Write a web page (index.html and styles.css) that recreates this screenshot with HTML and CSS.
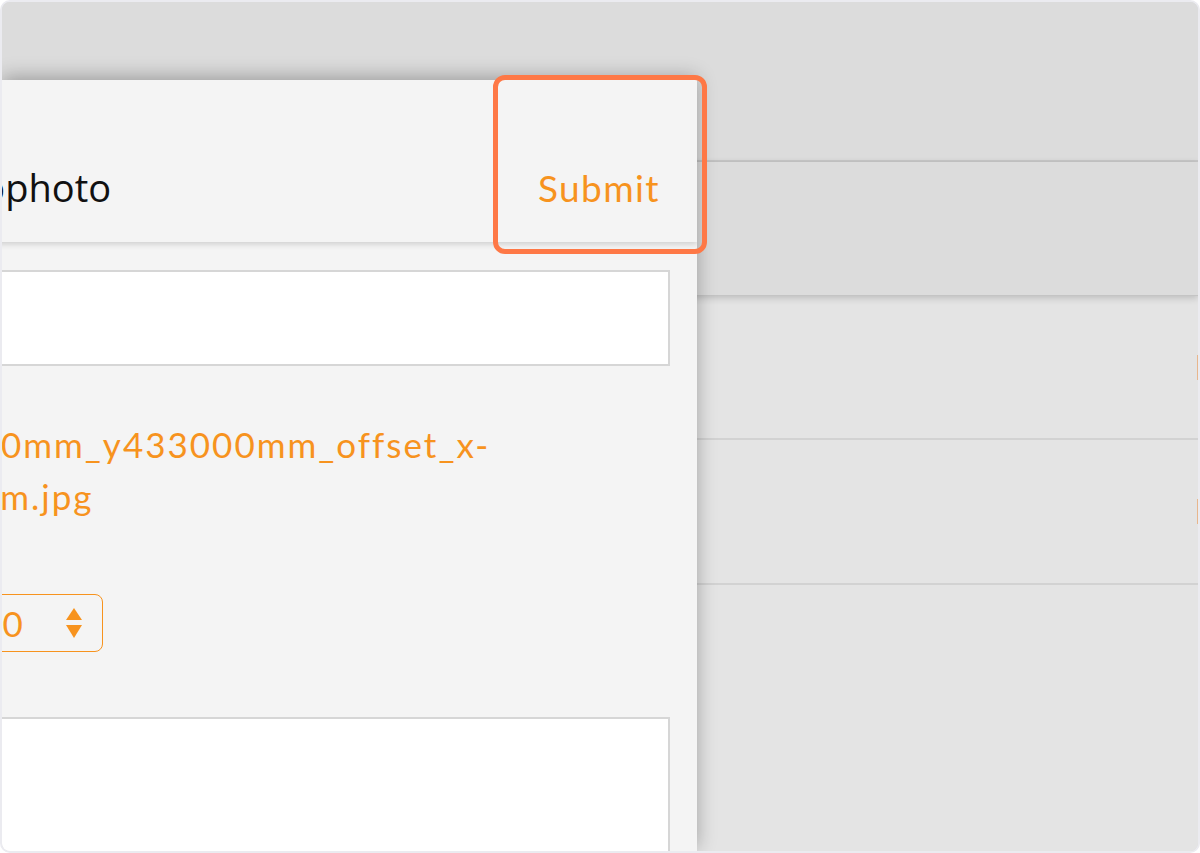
FILE: index.html
```html
<!DOCTYPE html>
<html>
<head>
	<title>Add geophoto</title>
	<meta name="viewport" content="width=device-width">
<link rel="stylesheet" href="styles.css">
</head>
<body>
	<div class="frame">
		<div class="toolbar"></div>
		<div class="subbar"></div>
		<div class="list">
			<div class="row"><span class="chip"></span></div>
			<div class="row"><span class="chip"></span></div>
			<div class="row"></div>
		</div>

		<div class="sheet">
			<div class="sheet-head">
				<div class="sheet-title">Add geophoto</div>
				<button class="submit" type="button">Submit</button>
			</div>
			<div class="sheet-body">
				<input class="field" type="text" name="name">
				<div class="filename">x512000mm_y433000mm_offset_x-150.5mm.jpg</div>
				<div class="select">
					<span class="select-value">180</span>
					<svg class="select-arrows" width="16" height="30" viewBox="0 0 16 30">
						<path d="M8 0 L16 12 L0 12 Z" fill="#f7931e"/>
						<path d="M0 17 L16 17 L8 30 Z" fill="#f7931e"/>
					</svg>
				</div>
				<textarea class="notes" name="notes"></textarea>
			</div>
		</div>

		<div class="callout"></div>
	</div>
</body>
</html>
```
FILE: styles.css
```css
body{
	margin: 0;
	background: #fff;
	font-family: "Open Sans", sans-serif;
}

.frame{
	position: relative;
	height: 853px;
	box-sizing: border-box;
	border: 2px solid #ebebf0;
	border-radius: 10px;
	overflow: hidden;
	background: #dcdcdc;
}

/* app behind the sheet */
.toolbar{
	height: 158px;
	background: #dcdcdc;
	border-bottom: 2px solid #c8c8c8;
}
.subbar{
	position: relative;
	z-index: 1;
	height: 133px;
	background: #dcdcdc;
	border-bottom: 1px solid #c4c4c4;
	box-shadow: 0 2px 7px rgba(0,0,0,0.18);
}
.list{
	background: #e4e4e4;
	height: 600px;
}
.row{
	display: flex;
	justify-content: flex-end;
	align-items: center;
	height: 143px;
	border-bottom: 2px solid #d2d2d2;
}
.row:first-child{
	height: 142px;
}
.row:last-child{
	border-bottom: none;
}
.chip{
	width: 1px;
	height: 25px;
	background: #e8b68c;
}

/* sheet */
.sheet{
	position: absolute;
	z-index: 2;
	top: 78px;
	left: 0;
	bottom: 0;
	width: 695px;
	background: #f4f4f4;
	box-shadow: 0 -3px 18px rgba(0,0,0,0.3);
	overflow: hidden;
}
.sheet-head{
	display: flex;
	justify-content: space-between;
	align-items: flex-start;
	height: 162px;
	box-sizing: border-box;
	padding: 89px 37px 0 0;
	margin-left: -142px;
	background: #f4f4f4;
	box-shadow: 0 2px 6px rgba(0,0,0,0.16);
	position: relative;
}
.sheet-title{
	margin-top: -1px;
	font-size: 38px;
	line-height: 38px;
	color: #111;
}
.submit{
	border: none;
	background: none;
	padding: 0;
	font-family: Lato, sans-serif;
	font-size: 37px;
	line-height: 37px;
	letter-spacing: 1.4px;
	color: #f7931e;
}

.sheet-body{
	display: flex;
	flex-direction: column;
	align-items: flex-start;
	margin-left: -132px;
	padding: 28px 27px 0 0;
}
.field{
	display: block;
	width: 100%;
	height: 96px;
	box-sizing: border-box;
	border: 2px solid #d6d6d6;
	background: #fff;
	outline: none;
}
.filename{
	margin-top: 52px;
	font-family: Lato, sans-serif;
	font-size: 35px;
	line-height: 52px;
	letter-spacing: 2px;
	color: #f7931e;
	width: 100%;
}
.select{
	display: flex;
	align-items: center;
	justify-content: space-between;
	margin-top: 72px;
	width: 233px;
	height: 58px;
	box-sizing: border-box;
	padding: 0 20px 0 91px;
	border: 1.5px solid #f7931e;
	border-radius: 8px;
	font-family: Lato, sans-serif;
	font-size: 35px;
	color: #f7931e;
}
.notes{
	display: block;
	margin-top: 65px;
	width: 100%;
	height: 200px;
	box-sizing: border-box;
	border: 2px solid #d6d6d6;
	background: #fff;
	resize: none;
}

/* highlight round the submit button */
.callout{
	position: absolute;
	z-index: 3;
	left: 491px;
	top: 73px;
	width: 214px;
	height: 179px;
	box-sizing: border-box;
	border: 5px solid #fe7846;
	border-radius: 12px;
}
```
